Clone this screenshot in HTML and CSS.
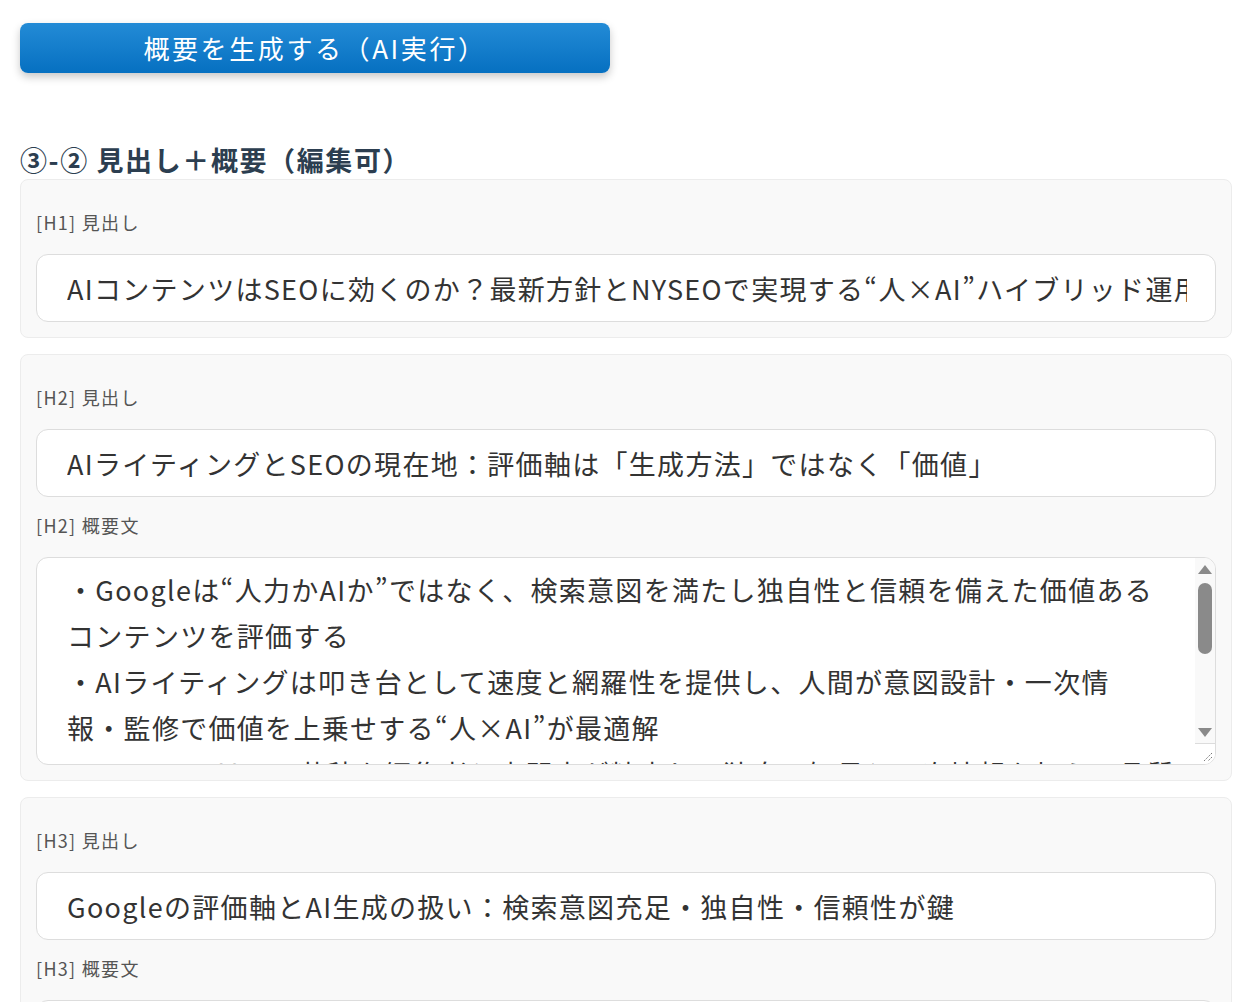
FILE: index.html
```html
<!DOCTYPE html>
<html lang="ja">
<head>
<meta charset="utf-8">
<title>見出し＋概要</title>
<link rel="stylesheet" href="styles.css">
</head>
<body>
<main class="page">
  <button class="gen-btn" type="button">概要を生成する（AI実行）</button>

  <h2 class="section-title">③-② 見出し＋概要（編集可）</h2>

  <section class="card">
    <div class="field">
      <label class="field-label">[H1] 見出し</label>
      <input class="text-input" type="text" value="AIコンテンツはSEOに効くのか？最新方針とNYSEOで実現する“人×AI”ハイブリッド運用術">
    </div>
  </section>

  <section class="card">
    <div class="field">
      <label class="field-label">[H2] 見出し</label>
      <input class="text-input" type="text" value="AIライティングとSEOの現在地：評価軸は「生成方法」ではなく「価値」">
    </div>
    <div class="field">
      <label class="field-label">[H2] 概要文</label>
      <div class="ta-wrap">
        <textarea class="text-area">・Googleは“人力かAIか”ではなく、検索意図を満たし独自性と信頼を備えた価値ある
コンテンツを評価する
・AIライティングは叩き台として速度と網羅性を提供し、人間が意図設計・一次情
報・監修で価値を上乗せする“人×AI”が最適解
・NYSEOではAIの草稿を編集者と専門家が精査し、独自の知見と一次情報を加えて品質を担保する</textarea>
        <div class="ta-scroll" aria-hidden="true">
          <svg width="20" height="206" viewBox="0 0 20 206">
            <rect x="0" y="0" width="20" height="206" fill="#f9f9f9"/>
            <polygon points="3,16 10,7 17,16" fill="#8a8a8a"/>
            <rect x="3" y="25" width="14" height="71" rx="7" fill="#8a8a8a"/>
            <polygon points="3,170 17,170 10,179" fill="#8a8a8a"/>
            <rect x="-0.5" y="185.5" width="21" height="22" fill="#fff" stroke="#dcdcdc"/>
            <line x1="17" y1="195" x2="9" y2="203" stroke="#777" stroke-width="1" stroke-dasharray="1.5 1"/>
            <line x1="17" y1="199" x2="13" y2="203" stroke="#777" stroke-width="1" stroke-dasharray="1.5 1"/>
          </svg>
        </div>
      </div>
    </div>
  </section>

  <section class="card">
    <div class="field">
      <label class="field-label">[H3] 見出し</label>
      <input class="text-input" type="text" value="Googleの評価軸とAI生成の扱い：検索意図充足・独自性・信頼性が鍵">
    </div>
    <div class="field">
      <label class="field-label">[H3] 概要文</label>
      <div class="ta-wrap">
        <textarea class="text-area">・検索意図の充足と独自性・信頼性がAI生成コンテンツでも評価の鍵となる</textarea>
      </div>
    </div>
  </section>
</main>
</body>
</html>
```

FILE: styles.css
```css
* {
  box-sizing: border-box;
}

html, body {
  margin: 0;
  padding: 0;
  background: #ffffff;
}

body {
  font-family: "Noto Sans CJK JP", "Noto Sans", sans-serif;
  color: #333333;
}

.page {
  width: 1212px;
  margin-left: 20px;
  padding-top: 23px;
  display: flex;
  flex-direction: column;
}

.gen-btn {
  align-self: flex-start;
  width: 590px;
  height: 50px;
  border: none;
  border-radius: 8px;
  background: linear-gradient(to bottom, #238bd6, #0670c1);
  color: #ffffff;
  font-family: "Noto Sans CJK JP", sans-serif;
  font-size: 26px;
  letter-spacing: 2.6px;
  line-height: 50px;
  padding: 0;
  box-shadow: 0 4px 9px rgba(0, 0, 0, 0.22);
  cursor: pointer;
}

.section-title {
  margin: 69px 0 1px;
  font-size: 27px;
  line-height: 36px;
  font-weight: 700;
  letter-spacing: 1.6px;
  color: #2c3e50;
}

.card {
  background: #f9f9f9;
  border: 1px solid #ececec;
  border-radius: 8px;
  padding: 14px 15px 15px;
  margin-bottom: 16px;
}

.field {
  margin-top: 16px;
  display: flex;
  flex-direction: column;
}

.field-label {
  font-size: 18px;
  line-height: 24px;
  color: #555555;
  letter-spacing: 1.3px;
  margin-bottom: 20px;
}

.text-input {
  width: 100%;
  height: 68px;
  border: 1px solid #dddddd;
  border-radius: 12px;
  background: #ffffff;
  padding: 0 28px 0 30px;
  font-family: "Noto Sans CJK JP", sans-serif;
  font-size: 27px;
  letter-spacing: 1.3px;
  color: #333333;
  outline: none;
}

.ta-wrap {
  position: relative;
}

.text-area {
  display: block;
  width: 100%;
  height: 208px;
  border: 1px solid #dddddd;
  border-radius: 12px;
  background: #ffffff;
  padding: 9px 22px 10px 30px;
  font-family: "Noto Sans CJK JP", sans-serif;
  font-size: 27px;
  line-height: 46px;
  letter-spacing: 1.3px;
  color: #333333;
  resize: none;
  overflow: hidden;
  outline: none;
}

.ta-scroll {
  position: absolute;
  top: 1px;
  right: 1px;
  width: 20px;
  height: 206px;
  border-top-right-radius: 11px;
  border-bottom-right-radius: 11px;
  overflow: hidden;
}

.ta-scroll svg {
  display: block;
}
```
